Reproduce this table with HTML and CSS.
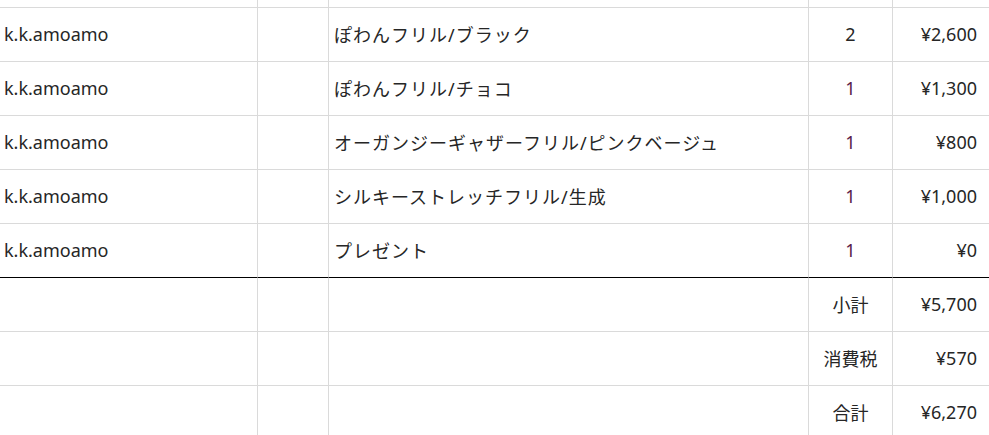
FILE: index.html
```html
<!DOCTYPE html>
<html lang="ja">
<head>
<meta charset="utf-8">
<link rel="stylesheet" href="styles.css">
</head>
<body>
<div class="sheet">
  <div class="row top"><div class="c c1"></div><div class="c c2"></div><div class="c c3"></div><div class="c c4"></div><div class="c c5"></div></div>
  <div class="row"><div class="c c1">k.k.amoamo</div><div class="c c2"></div><div class="c c3">ぽわんフリル/ブラック</div><div class="c c4">2</div><div class="c c5">¥2,600</div></div>
  <div class="row"><div class="c c1">k.k.amoamo</div><div class="c c2"></div><div class="c c3">ぽわんフリル/チョコ</div><div class="c c4 one">1</div><div class="c c5">¥1,300</div></div>
  <div class="row"><div class="c c1">k.k.amoamo</div><div class="c c2"></div><div class="c c3">オーガンジーギャザーフリル/ピンクベージュ</div><div class="c c4 one">1</div><div class="c c5">¥800</div></div>
  <div class="row"><div class="c c1">k.k.amoamo</div><div class="c c2"></div><div class="c c3">シルキーストレッチフリル/生成</div><div class="c c4 one">1</div><div class="c c5">¥1,000</div></div>
  <div class="row last"><div class="c c1">k.k.amoamo</div><div class="c c2"></div><div class="c c3">プレゼント</div><div class="c c4 one">1</div><div class="c c5">¥0</div></div>
  <div class="row"><div class="c c1"></div><div class="c c2"></div><div class="c c3"></div><div class="c c4">小計</div><div class="c c5">¥5,700</div></div>
  <div class="row"><div class="c c1"></div><div class="c c2"></div><div class="c c3"></div><div class="c c4">消費税</div><div class="c c5">¥570</div></div>
  <div class="row"><div class="c c1"></div><div class="c c2"></div><div class="c c3"></div><div class="c c4">合計</div><div class="c c5">¥6,270</div></div>
</div>
</body>
</html>
```
FILE: styles.css
```css
html, body {
  margin: 0;
  padding: 0;
  background: #fff;
  overflow: hidden;
}
.sheet {
  display: flex;
  flex-direction: column;
  font-family: "Noto Sans", "Noto Sans CJK JP", sans-serif;
  font-size: 18px;
  color: #262626;
}
.row {
  display: grid;
  grid-template-columns: 258px 71px 480px 84px 1fr;
  height: 54px;
}
.row.top {
  height: 8px;
}
.c {
  box-sizing: border-box;
  border-right: 1px solid #dadada;
  border-bottom: 1px solid #dadada;
  display: flex;
  align-items: center;
  white-space: nowrap;
  padding-bottom: 1px;
}
.c5 { border-right: none; }
.row.last .c {
  border-bottom: 1px solid #000;
}
.c1 { padding-left: 4px; }
.c3 { padding-left: 5px; letter-spacing: 1px; }
.c4 { justify-content: center; }
.c5 { justify-content: flex-end; padding-right: 12px; }
.one { color: #5a2149; }
```
